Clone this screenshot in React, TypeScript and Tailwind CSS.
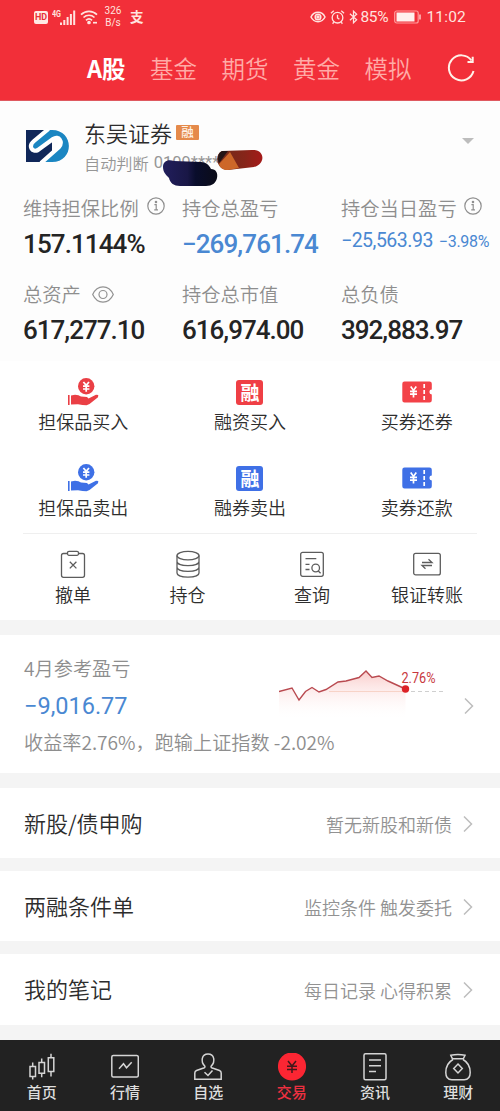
import type { ReactNode } from 'react';
import clsx from 'clsx';

const markets = ['A股', '基金', '期货', '黄金', '模拟'];

const rowLinks = [
  { title: '新股/债申购', note: '暂无新股和新债', box: 'h-[70px] pt-px' },
  { title: '两融条件单', note: '监控条件 触发委托', box: 'h-[70px] pt-px' },
  { title: '我的笔记', note: '每日记录 心得积累', box: 'h-[71px]' },
];

function InfoIcon() {
  return (
    <svg viewBox="0 0 18 18" className="h-[18px] w-[18px]" fill="none" stroke="#8f8f8f" strokeWidth="1.2">
      <circle cx="9" cy="9" r="8.2" />
      <path d="M7.4 7.6H9.2V12.6M7.2 12.8h3.8" />
      <circle cx="9" cy="5" r=".7" fill="#8f8f8f" />
    </svg>
  );
}

function EyeIcon() {
  return (
    <svg viewBox="0 0 22 17" className="h-[17px] w-[22px]" fill="none" stroke="#929292" strokeWidth="1.2">
      <path d="M.7 8.5C3 3.5 6.6 .9 11 .9S19 3.5 21.3 8.5C19 13.5 15.4 16.1 11 16.1S3 13.5 .7 8.5Z" />
      <circle cx="11" cy="8.5" r="4" />
    </svg>
  );
}

function HandIcon({ className }: { className: string }) {
  return (
    <svg viewBox="0 0 32 28" className={clsx('h-7 w-8', className)} fill="currentColor">
      <circle cx="19.2" cy="8.2" r="8.2" />
      <path d="M16.4 4 19.2 7.4 22 4M19.2 7.4v6.3M16 8.2h6.4M16 11h6.4" stroke="#fff" strokeWidth="1.7" fill="none" />
      <path d="M1 17H2.6V27H1Z" />
      <path d="M4 17.5L8 16.8L11.5 17.2L14 18.6L20 19L21.5 20.5L29 16.8L31.3 17L31 19.2L22.5 26L19.5 27.2L15.5 27L11 26.3L4 26.6Z" />
    </svg>
  );
}

function RongIcon({ className }: { className: string }) {
  return (
    <span className={clsx('flex h-[25px] w-[27px] items-center justify-center rounded-[3px] pb-px text-[19px] font-bold leading-none text-white', className)}>
      融
    </span>
  );
}

function TicketIcon({ className }: { className: string }) {
  return (
    <svg viewBox="0 0 30 22" className={clsx('h-[22px] w-[30px]', className)} fill="currentColor">
      <path d="M2.5 .5H27.5Q29.8 .5 29.8 2.8V8.6A2.4 2.4 0 0 0 29.8 13.4V19.2Q29.8 21.5 27.5 21.5H2.5Q.3 21.5 .3 19.2V2.8Q.3 .5 2.5 .5Z" />
      <path d="M8.7 5.6 11.5 9.4l2.8-3.8M11.5 9.4v7M8 10.3h7M8 13.2h7" stroke="#fff" strokeWidth="1.7" fill="none" />
      <path d="M22.2 3v16" stroke="#fff" strokeWidth="1.7" strokeDasharray="4 2" />
    </svg>
  );
}

const trades = [
  { name: '担保品买入', icon: <HandIcon className="text-[#ea3f45]" /> },
  { name: '融资买入', icon: <RongIcon className="bg-[#ef3f45]" /> },
  { name: '买券还券', icon: <TicketIcon className="text-[#f34248]" /> },
  { name: '担保品卖出', icon: <HandIcon className="text-[#3e70e6]" /> },
  { name: '融券卖出', icon: <RongIcon className="bg-[#3f70e6]" /> },
  { name: '卖券还款', icon: <TicketIcon className="text-[#3f70e6]" /> },
];

const tools = [
  {
    name: '撤单',
    width: 'w-[100px]',
    icon: (
      <>
        <path d="M8.500 3.500H4.500Q2.500 3.500 2.500 5.500V25.300Q2.500 27.300 4.500 27.300H23.500Q25.500 27.300 25.500 25.300V5.500Q25.500 3.500 23.500 3.500H19.500" />
        <rect x="8.500" y="1.300" width="11" height="4" rx="1.500" />
        <path d="m10.800 11.800 6.600 6.600M17.400 11.800l-6.600 6.600" />
      </>
    ),
  },
  {
    name: '持仓',
    width: 'w-[129px]',
    icon: (
      <>
        <ellipse cx="14" cy="5.600" rx="11" ry="4.300" />
        <path d="M3 5.600V23c0 5.500 22 5.500 22 0V5.600M3 11.500c0 5.500 22 5.500 22 0M3 17.300c0 5.500 22 5.500 22 0" />
      </>
    ),
  },
  {
    name: '查询',
    width: 'w-[120px]',
    icon: (
      <>
        <rect x="2.700" y="2.300" width="22.600" height="24" rx="2" />
        <path d="M7.500 8.700h10.800M7.500 14.300h4M7.500 19.500h4M20.300 21l2.300 2.200" />
        <circle cx="17.700" cy="18" r="3.800" />
      </>
    ),
  },
  {
    name: '银证转账',
    width: 'w-[110px]',
    icon: (
      <>
        <rect x=".7" y="3.300" width="26.600" height="21.600" rx="2" />
        <path d="M9 12.500h10l-3.500-3.200M19 15.500H9l3.500 3.300" />
      </>
    ),
  },
];

const navItems = [
  {
    name: '首页',
    icon: <path d="M4.700 9.500v4M4.700 23.500v3M2 13.500h5.500v10H2zM13.700 5.500v4M13.700 20.300v4M11 9.500h5.500v10.800H11zM23 .7v4M23 18.500v5M20.300 4.700h5.500v13.800h-5.500z" />,
  },
  {
    name: '行情',
    icon: (
      <>
        <rect x=".8" y="2.500" width="26.500" height="21.500" rx="1.500" />
        <path d="m8 15.800 4.500-5 3 4 5.200-5.500" />
      </>
    ),
  },
  {
    name: '自选',
    icon: (
      <>
        <path d="M10.700 13C6.500 8.500 7.500 1 14 1s7.500 7.500 3.300 12c-.9 1.500.3 1.800 1.800 2.300l6.400 2.200c1.300.5 1.700 1.300 1.700 2.500v6.200H.8V20c0-1.200.4-2 1.700-2.500l6.400-2.200c1.500-.5 2.700-.8 1.800-2.300Z" />
        <path d="m10.500 19.300 3.500 3.200 4.500-5" />
      </>
    ),
  },
  {
    name: '交易',
    active: true,
    icon: (
      <>
        <circle cx="14" cy="13.500" r="13.300" fill="#fb2633" stroke="#fb2633" />
        <path d="m10 8 4 5 4-5M14 13v7M9 13.200h10M9 16.500h10" stroke="#41181b" />
      </>
    ),
  },
  {
    name: '资讯',
    icon: (
      <>
        <rect x="3" y=".8" width="22" height="26" rx="1.500" />
        <path d="M8 7h12M8 12.700h12M8 18.400h7" />
      </>
    ),
  },
  {
    name: '理财',
    icon: (
      <>
        <path d="M8.500 5.800 6.800 2.300Q14 .8 21 2.300L19.300 5.800ZM9 6.500C4.500 9 1.800 14 1.800 19.500c0 5.500 2.500 7.200 6 7.200h12.400c3.500 0 6-1.700 6-7.200C26.200 14 23.500 9 19 6.500" />
        <path d="m14 11 4.300 4.500L14 20l-4.300-4.500Z" />
      </>
    ),
  },
];

function StatusBar() {
  return (
    <div className="flex h-[34px] items-center pl-[34px] pr-[34px] font-[Roboto] font-normal text-[#ffe3df]">
      <span className="flex h-[13px] w-[14px] items-center justify-center rounded-[2px] bg-[#ffe9e4] text-[9px] font-bold leading-none text-[#e8303a]">
        HD
      </span>
      <svg viewBox="0 0 24 17" className="ml-[4px] h-[17px] w-6" fill="currentColor">
        <text x="0" y="7.500" fontSize="9.500" fontWeight="700" textLength="9" lengthAdjust="spacingAndGlyphs">4G</text>
        <path d="M8 13.500h2V16H8zM11.300 11h2v5h-2zM14.600 8h2v8h-2zM17.900 5h2v11h-2zM21.200 1.500h2V16h-2z" />
      </svg>
      <svg viewBox="0 0 18 16" className="ml-[4px] h-4 w-[18px]" fill="none" stroke="currentColor" strokeWidth="1.700">
        <path d="M1 5.700c4.500-4.500 11.500-4.500 16 0M3.500 8.500c3.200-3 7.800-3 11 0M6 11.300c1.800-1.700 4.200-1.700 6 0" />
        <circle cx="9" cy="13.500" r="1" fill="currentColor" />
        <path d="M13 13.700h4" />
      </svg>
      <span className="ml-[5px] w-[20px] text-center text-[10px] leading-[12px]">326 B/s</span>
      <span className="ml-[7px] font-['Noto_Sans_CJK_SC'] text-[13.500px] font-bold leading-none">支</span>
      <svg viewBox="0 0 16 14" className="ml-auto h-[14px] w-4" fill="none" stroke="currentColor" strokeWidth="1.500">
        <path d="M1 7C4 .8 12 .8 15 7 12 13.200 4 13.200 1 7Z" />
        <circle cx="8" cy="7" r="2.800" />
        <circle cx="8" cy="7" r="1" fill="currentColor" />
      </svg>
      <svg viewBox="0 0 16 16" className="ml-[4px] h-4 w-[15px]" fill="none" stroke="currentColor" strokeWidth="1.400">
        <circle cx="8" cy="8.700" r="5.700" />
        <path d="M8 5.500v3.500l2 1.500M1 4l3-2.700M15 4l-3-2.700M4 13.500l-1.200 1.700M12 13.500l1.200 1.700" />
      </svg>
      <svg viewBox="0 0 10 16" className="ml-[4px] h-4 w-[9px]" fill="none" stroke="currentColor" strokeWidth="1.400">
        <path d="M1 4.500 8.500 11 5 14.500v-13L8.500 5 1 11.500" />
      </svg>
      <span className="ml-[2px] w-[31px] pt-px text-[15.500px] tracking-[-0.3px]">85%</span>
      <svg viewBox="0 0 28 14" className="ml-[3px] h-[14px] w-7">
        <rect x=".7" y="1" width="23.500" height="12" rx="2" fill="none" stroke="#ff9b9b" strokeWidth="1.200" />
        <rect x="2.500" y="2.500" width="18" height="9" fill="#fff0ed" />
        <path d="M26 4.500v5" stroke="#ffc7c5" strokeWidth="1.500" />
      </svg>
      <span className="ml-[4px] pt-[2px] text-[15.500px] tracking-[0.2px]">11:02</span>
    </div>
  );
}

function Stat({ label, icon, children }: { label: string; icon?: ReactNode; children: ReactNode }) {
  return (
    <div className="h-[86px] whitespace-nowrap">
      <div className="flex h-[30px] items-center text-[19.300px] text-[#8e8e8e]">
        <span className="pt-[2px]">{label}</span>
        {icon}
      </div>
      <div className="flex h-[42px] items-center font-[Roboto] text-[26px] font-medium tracking-[-1px] text-[#242424]">
        {children}
      </div>
    </div>
  );
}

function Chevron() {
  return (
    <svg viewBox="0 0 10 18" className="h-[18px] w-[10px] shrink-0" fill="none" stroke="#bdbdbd" strokeWidth="1.500">
      <path d="m1 1.500 7.500 7.500L1 16.500" />
    </svg>
  );
}

export default function App() {
  return (
    <div className="h-[1111px] w-[500px] overflow-hidden bg-[#f4f4f4] font-['Noto_Sans_CJK_SC',sans-serif] font-[350] leading-none">
      <header className="h-[101px] border-b border-[#df5960] bg-[#f22f39]">
        <StatusBar />
        <div className="flex h-[66px] items-center pl-[87px]">
          {markets.map((name, i) => (
            <span
              key={name}
              className={clsx('pt-[3px] text-[23.500px]', i === 0 ? 'w-[63px] font-bold text-white' : 'w-[71.500px] text-[#ffaba7]')}
            >
              {name}
            </span>
          ))}
          <svg viewBox="0 0 28 28" className="ml-[11px] mt-[2px] h-7 w-7" fill="none" stroke="#fff1e8" strokeWidth="2">
            <path d="M24.500 6.500A12.500 12.500 0 1 0 26.500 17" />
            <path d="M25.700 2.800V8H20.500" />
          </svg>
        </div>
      </header>

      <section className="h-[260px] bg-[#fdfdfd] pt-[20px]">
        <div className="flex h-[72px] pl-[26px] pr-[26px]">
          <svg viewBox="0 0 44 34" className="mt-[8px] h-[34px] w-[44px]">
            <path d="M0 1H26V33H0Z" fill="#102759" />
            <path d="M22 1H26C48.500 1 48.500 33 26 33H16L33 18C37 13 33 6 27 10L12 21C6 24 2 17 8 12Z" fill="#1b86c2" />
            <path d="M22.500 0 8 12C2 17 6 24 12 21L27 10C33 6 37 13 33 18L15 34" fill="none" stroke="#fff" strokeWidth="4.200" />
          </svg>
          <div className="relative ml-[14px]">
            <div className="flex h-[26px] items-center pb-[4px] text-[22px] text-[#2c2c2c]">
              东吴证券
              <span className="ml-[4px] flex h-[15px] w-[23px] items-center justify-center rounded-[1px] bg-[#e58a4b] text-[12.500px] font-medium text-[#fff3e8]">
                融
              </span>
            </div>
            <div className="flex h-[32px] items-center whitespace-nowrap text-[16.200px] text-[#969696]">
              自动判断<span className="ml-[5px] font-[Roboto] text-[16.500px] font-normal">0109****</span>
            </div>
            {/* scribbles that hide the account number */}
            <svg viewBox="0 0 102 40" className="absolute left-[78px] top-[27px] h-10 w-[102px]">
              <defs>
                <linearGradient id="navy">
                  <stop offset="0" stopColor="#211e5c" />
                  <stop offset=".45" stopColor="#191746" />
                  <stop offset=".6" stopColor="#090d2c" />
                  <stop offset="1" stopColor="#0b0c18" />
                </linearGradient>
                <linearGradient id="rust">
                  <stop offset="0" stopColor="#6f2b1b" />
                  <stop offset=".6" stopColor="#862519" />
                  <stop offset="1" stopColor="#a51a19" />
                </linearGradient>
              </defs>
              <path d="M1 19c0-6 5-8 11-6l27 1c5 0 8 3 10 7 5 0 7 4 6 9-1 5-5 8-11 8H18c-6 0-10-3-11-8-3-3-6-6-6-11Z" fill="url(#navy)" />
              <path d="M60 3 90 2c13-1 14 14 2 17l-26 3c-12 0-14-16-6-19Z" fill="url(#rust)" />
              <path d="m68 4 9 16-11 2c-5 0-8-2-9-6Z" fill="#cd6729" />
              <path d="M60 3h6l-9 12c-2-5-1-10 3-12Z" fill="#251516" />
            </svg>
          </div>
          <svg viewBox="0 0 12 6" className="ml-auto mt-[17px] h-[6px] w-3" fill="#bdbdbd">
            <path d="M0 0h12L6 6Z" />
          </svg>
        </div>
        <div className="grid grid-cols-[159px_159px_159px] pl-[23px]">
          <Stat label="维持担保比例" icon={<span className="mb-[5px] ml-[8px]"><InfoIcon /></span>}>
            <span className="tracking-[-0.900px]">157.1144%</span>
          </Stat>
          <Stat label="持仓总盈亏">
            <span className="tracking-[-0.900px] text-[#4a88d2]">−269,761.74</span>
          </Stat>
          <Stat label="持仓当日盈亏" icon={<span className="mb-[5px] ml-[7px]"><InfoIcon /></span>}>
            <span className="mb-[7px] text-[19.500px] font-normal tracking-[-0.500px] text-[#4a88d2]">−25,563.93</span>
            <span className="mb-[5px] ml-[6px] text-[16px] font-normal tracking-[-0.300px] text-[#4a88d2]">−3.98%</span>
          </Stat>
          <Stat label="总资产" icon={<span className="ml-[11px]"><EyeIcon /></span>}>617,277.10</Stat>
          <Stat label="持仓总市值">616,974.00</Stat>
          <Stat label="总负债">392,883.97</Stat>
        </div>
      </section>

      <section className="h-[259px] bg-white">
        <div className="grid grid-cols-3">
          {trades.map((item) => (
            <div key={item.name} className="flex h-[86px] flex-col items-center pt-[16px]">
              <div className="flex h-[30px] items-center">{item.icon}</div>
              <div className="flex h-[28px] items-center text-[18px] text-[#2e2e2e]">{item.name}</div>
            </div>
          ))}
        </div>
        <div className="mx-[23px] border-t border-[#efefef]" />
        <div className="flex pl-[23px]">
          {tools.map((item) => (
            <div key={item.name} className={clsx('flex flex-col items-center pt-[16px]', item.width)}>
              <svg viewBox="0 0 28 28" className="h-7 w-7" fill="none" stroke="#5c5c5c" strokeWidth="1.300">
                {item.icon}
              </svg>
              <div className="mt-[2px] flex h-[28px] items-center text-[18px] text-[#2e2e2e]">{item.name}</div>
            </div>
          ))}
        </div>
      </section>

      <section className="mt-[15px] flex h-[138px] items-center bg-white pl-[24px] pr-[26px]">
        <div className="relative flex-1 whitespace-nowrap">
          <div className="flex h-[37px] items-center pt-[4px] text-[19.200px] text-[#8e8e8e]">4月参考盈亏</div>
          <div className="flex h-[38px] items-center pt-[5px] font-[Roboto] text-[23.500px] font-normal text-[#4a88d2]">
            −9,016.77
          </div>
          <div className="flex h-[37px] items-center pt-[3px] text-[19.150px] text-[#8e8e8e]">收益率2.76%，跑输上证指数 -2.02%</div>
          <svg viewBox="0 0 170 60" className="absolute left-[255px] top-[15px] h-[60px] w-[170px]">
            <defs>
              <linearGradient id="area" x1="0" y1="0" x2="0" y2="1">
                <stop offset="0" stopColor="#f6aaa7" stopOpacity=".6" />
                <stop offset="1" stopColor="#fff" stopOpacity="0" />
              </linearGradient>
            </defs>
            <path d="M0 28.500 13 25l7 12 6.500-8.500L33 24.500l7 4.500 7-2.500L59 19l8-1 13-3.500L87 8l6 6.500 7-1.500 9 5 17.500 8V57H0Z" fill="url(#area)" />
            <path d="M50 28.500h77" stroke="#f5cbbd" strokeWidth=".8" />
            <path d="M132 28.500h32" stroke="#cfcfcf" strokeDasharray="4 3" />
            <path d="M0 28.500 13 25l7 12 6.500-8.500L33 24.500l7 4.500 7-2.500L59 19l8-1 13-3.500L87 8l6 6.500 7-1.500 9 5 17.500 8" fill="none" stroke="#b94a50" strokeWidth="1.400" />
            <circle cx="126.500" cy="26" r="3.700" fill="#dc2328" />
            <text
              x="122.500"
              y="20"
              fontSize="14"
              fontWeight="400"
              fill="#c8383d"
              fontFamily="Roboto"
              textLength="34"
              lengthAdjust="spacingAndGlyphs"
            >
              2.76%
            </text>
          </svg>
        </div>
        <div className="pt-[3px]">
          <Chevron />
        </div>
      </section>

      <div className="mt-[15px] flex flex-col gap-[13px]">
        {rowLinks.map((item) => (
          <div key={item.title} className={clsx('flex items-center bg-white pl-[24px] pr-[27px]', item.box)}>
            <span className="flex-1 pb-[3px] text-[22px] text-[#2c2c2c]">{item.title}</span>
            <span className="mr-[11px] text-[18px] text-[#929292]">{item.note}</span>
            <Chevron />
          </div>
        ))}
      </div>

      <nav className="mt-[15px] grid h-[72px] grid-cols-6 bg-[#222]">
        {navItems.map((item) => (
          <div key={item.name} className="flex flex-col items-center pt-[13px]">
            <svg viewBox="0 0 28 28" className="h-7 w-7" fill="none" stroke="#d5d5d5" strokeWidth="1.500">
              {item.icon}
            </svg>
            <span className={clsx('mt-[3px] text-[15px] font-medium', item.active ? 'text-[#ee3040]' : 'text-[#dedede]')}>
              {item.name}
            </span>
          </div>
        ))}
      </nav>
    </div>
  );
}
